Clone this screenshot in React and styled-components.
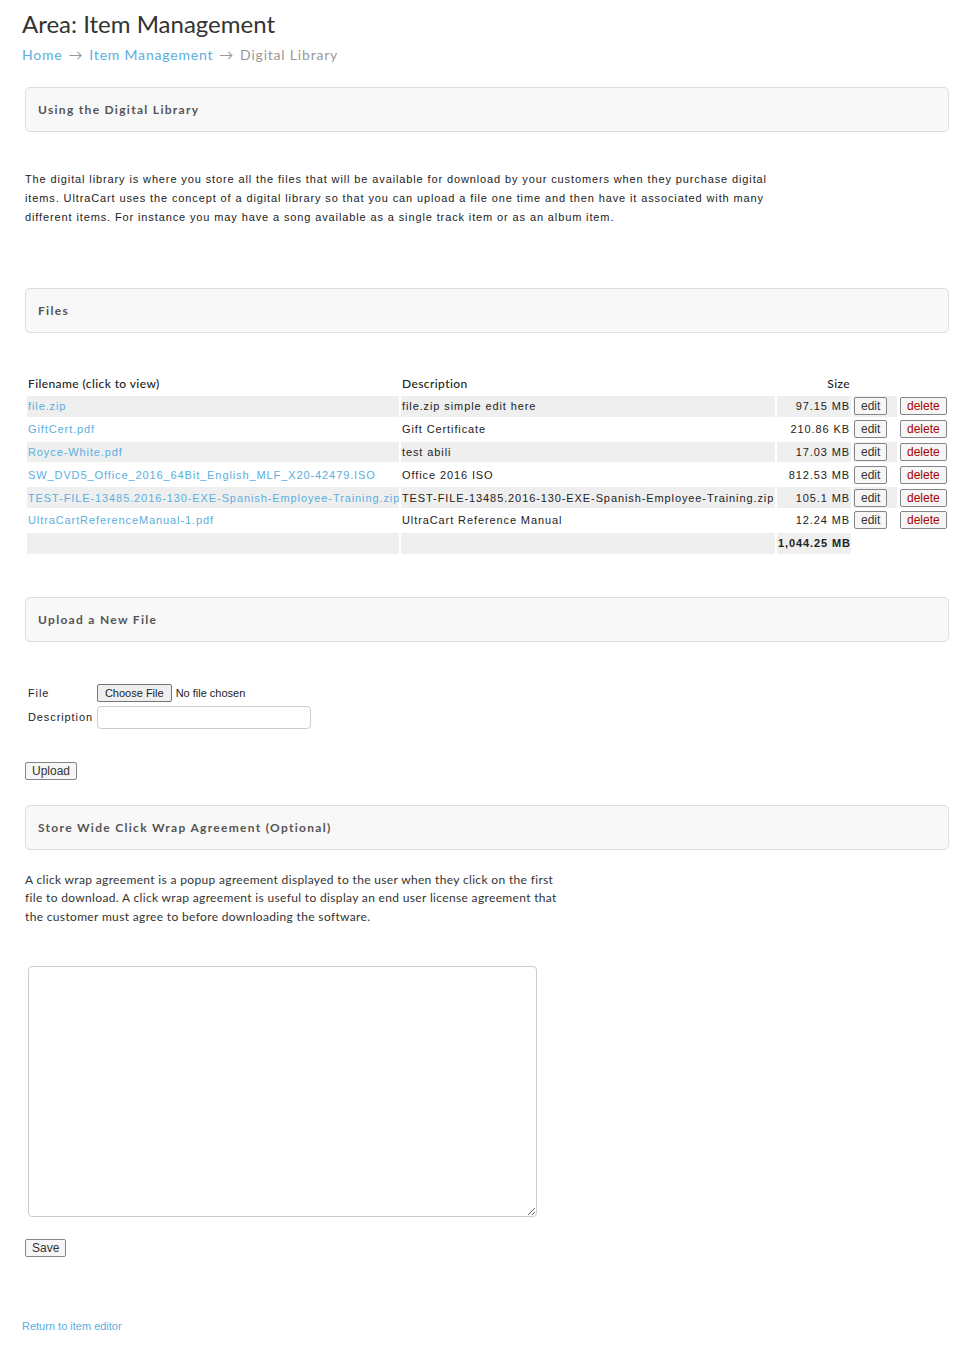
import React from 'react';
import styled, { createGlobalStyle } from 'styled-components';

const GlobalStyle = createGlobalStyle`
  body {
    margin: 0;
    background: #fff;
    font-family: "Liberation Sans", Arial, sans-serif;
    color: #222;
  }
`;

const LINK = '#5aaee0';

const Page = styled.div`
  padding: 9px 6px 30px 22px;
`;

const Title = styled.h1`
  margin: 0;
  font-family: Lato, sans-serif;
  font-weight: 400;
  font-size: 24px;
  line-height: 30px;
  color: #333;
`;

const Crumbs = styled.div`
  display: flex;
  gap: 6px;
  margin-top: 4px;
  font-family: Lato, sans-serif;
  font-size: 14px;
  letter-spacing: 0.8px;
  line-height: 24px;
  color: #999;
`;

const CrumbLink = styled.a`
  color: ${LINK};
  text-decoration: none;
`;

const Body = styled.div`
  margin-left: 3px;
`;

const Panel = styled.div`
  box-sizing: border-box;
  height: 45px;
  margin-top: ${p => p.$top}px;
  display: flex;
  align-items: center;
  padding: 0 12px;
  background: #f8f8f8;
  border: 1px solid #ddd;
  border-radius: 5px;
  font-family: Lato, sans-serif;
  font-weight: 700;
  font-size: 12px;
  letter-spacing: 1.3px;
  color: #555;
`;

const Intro = styled.p`
  margin: 38px 0 0;
  max-width: 760px;
  font-size: 11px;
  line-height: 19px;
  letter-spacing: 0.88px;
  color: #222;
`;

const FileTable = styled.table`
  width: 100%;
  margin-top: 38px;
  table-layout: fixed;
  border-spacing: 2px;
  font-size: 11px;
  letter-spacing: 0.9px;
`;

const Th = styled.th`
  padding: 1px;
  height: 19px;
  font-family: Lato, sans-serif;
  font-weight: 500;
  font-size: 12px;
  letter-spacing: 0.4px;
  color: #222;
  text-align: ${p => (p.$right ? 'right' : 'left')};
`;

const Td = styled.td`
  padding: 0 1px;
  height: 20.8px;
  white-space: nowrap;
  overflow: hidden;
  background: ${p => (p.$shade ? '#efefef' : 'transparent')};
  text-align: ${p => (p.$right ? 'right' : 'left')};
  font-weight: ${p => (p.$bold ? 700 : 400)};
`;

const FileLink = styled.a`
  color: ${LINK};
  text-decoration: none;
`;

const SmallButton = styled.button`
  box-sizing: border-box;
  height: 18px;
  padding: 0 6px;
  margin: 0;
  font-family: "Liberation Sans", Arial, sans-serif;
  font-size: 12px;
  line-height: 14px;
  color: ${p => (p.$danger ? '#a80000' : '#333')};
  background: #f6f6f6;
  border: 1px solid #858585;
  border-radius: 2px;
`;

const FormTable = styled.table`
  margin-top: 39px;
  border-spacing: 2px;
  font-size: 11px;
  letter-spacing: 0.9px;
`;

const Label = styled.td`
  padding: 1px;
  color: #222;
`;

const FileInput = styled.input`
  font-family: "Liberation Sans", Arial, sans-serif;
  font-size: 11px;
  letter-spacing: 0;
  color: #222;

  &::file-selector-button {
    font: inherit;
    height: 18px;
    padding: 0 7px;
    margin-right: 4px;
    background: #efefef;
    border: 1px solid #767676;
    border-radius: 2px;
    color: #222;
  }
`;

const TextInput = styled.input`
  box-sizing: border-box;
  width: 214px;
  height: 23px;
  margin: 0;
  border: 1px solid #ccc;
  border-radius: 4px;
  background: #fff;
`;

const ActionRow = styled.div`
  margin-top: ${p => p.$top}px;
`;

const Blurb = styled.p`
  margin: 21px 0 0;
  max-width: 545px;
  font-family: Lato, sans-serif;
  font-size: 12px;
  line-height: 18.5px;
  letter-spacing: 0.34px;
  color: #333;
`;

const Agreement = styled.textarea`
  display: block;
  box-sizing: border-box;
  width: 509px;
  height: 251px;
  margin: 40px 0 0 3px;
  border: 1px solid #ccc;
  border-radius: 4px;
  resize: both;
`;

const BackLink = styled.a`
  display: block;
  margin: 63px 0 0 -3px;
  font-size: 11px;
  color: ${LINK};
  text-decoration: none;
`;

const files = [
  { name: 'file.zip', desc: 'file.zip simple edit here', size: '97.15 MB' },
  { name: 'GiftCert.pdf', desc: 'Gift Certificate', size: '210.86 KB' },
  { name: 'Royce-White.pdf', desc: 'test abili', size: '17.03 MB' },
  { name: 'SW_DVD5_Office_2016_64Bit_English_MLF_X20-42479.ISO', desc: 'Office 2016 ISO', size: '812.53 MB' },
  {
    name: 'TEST-FILE-13485.2016-130-EXE-Spanish-Employee-Training.zip',
    desc: 'TEST-FILE-13485.2016-130-EXE-Spanish-Employee-Training.zip',
    size: '105.1 MB',
  },
  { name: 'UltraCartReferenceManual-1.pdf', desc: 'UltraCart Reference Manual', size: '12.24 MB' },
];

export default function App() {
  return (
    <Page>
      <GlobalStyle />
      <Title>Area: Item Management</Title>
      <Crumbs>
        <CrumbLink href="#">Home</CrumbLink>
        <span>→</span>
        <CrumbLink href="#">Item Management</CrumbLink>
        <span>→</span>
        <span>Digital Library</span>
      </Crumbs>

      <Body>
        <Panel $top={20}>Using the Digital Library</Panel>
        <Intro>
          The digital library is where you store all the files that will be available for download by
          your customers when they purchase digital items. UltraCart uses the concept of a digital
          library so that you can upload a file one time and then have it associated with many
          different items. For instance you may have a song available as a single track item or as an
          album item.
        </Intro>

        <Panel $top={61}>Files</Panel>
        <FileTable>
          <colgroup>
            <col style={{ width: 372 }} />
            <col style={{ width: 374 }} />
            <col style={{ width: 74 }} />
            <col style={{ width: 44 }} />
            <col style={{ width: 48 }} />
          </colgroup>
          <thead>
            <tr>
              <Th>Filename (click to view)</Th>
              <Th>Description</Th>
              <Th $right>Size</Th>
              <Th />
              <Th />
            </tr>
          </thead>
          <tbody>
            {files.map((f, i) => {
              const shade = i % 2 === 0;
              return (
                <tr key={f.name}>
                  <Td $shade={shade}>
                    <FileLink href="#">{f.name}</FileLink>
                  </Td>
                  <Td $shade={shade}>{f.desc}</Td>
                  <Td $shade={shade} $right>{f.size}</Td>
                  <Td $shade={shade}>
                    <SmallButton>edit</SmallButton>
                  </Td>
                  <Td>
                    <SmallButton $danger>delete</SmallButton>
                  </Td>
                </tr>
              );
            })}
            <tr>
              <Td $shade />
              <Td $shade />
              <Td $shade $right $bold>1,044.25 MB</Td>
              <Td />
              <Td />
            </tr>
          </tbody>
        </FileTable>

        <Panel $top={41}>Upload a New File</Panel>
        <FormTable>
          <tbody>
            <tr>
              <Label>File</Label>
              <td>
                <FileInput type="file" />
              </td>
            </tr>
            <tr>
              <Label>Description</Label>
              <td>
                <TextInput type="text" />
              </td>
            </tr>
          </tbody>
        </FormTable>
        <ActionRow $top={29}>
          <SmallButton>Upload</SmallButton>
        </ActionRow>

        <Panel $top={25}>Store Wide Click Wrap Agreement (Optional)</Panel>
        <Blurb>
          A click wrap agreement is a popup agreement displayed to the user when they click on the
          first file to download. A click wrap agreement is useful to display an end user license
          agreement that the customer must agree to before downloading the software.
        </Blurb>
        <Agreement />
        <ActionRow $top={21}>
          <SmallButton>Save</SmallButton>
        </ActionRow>
        <BackLink href="#">Return to item editor</BackLink>
      </Body>
    </Page>
  );
}
